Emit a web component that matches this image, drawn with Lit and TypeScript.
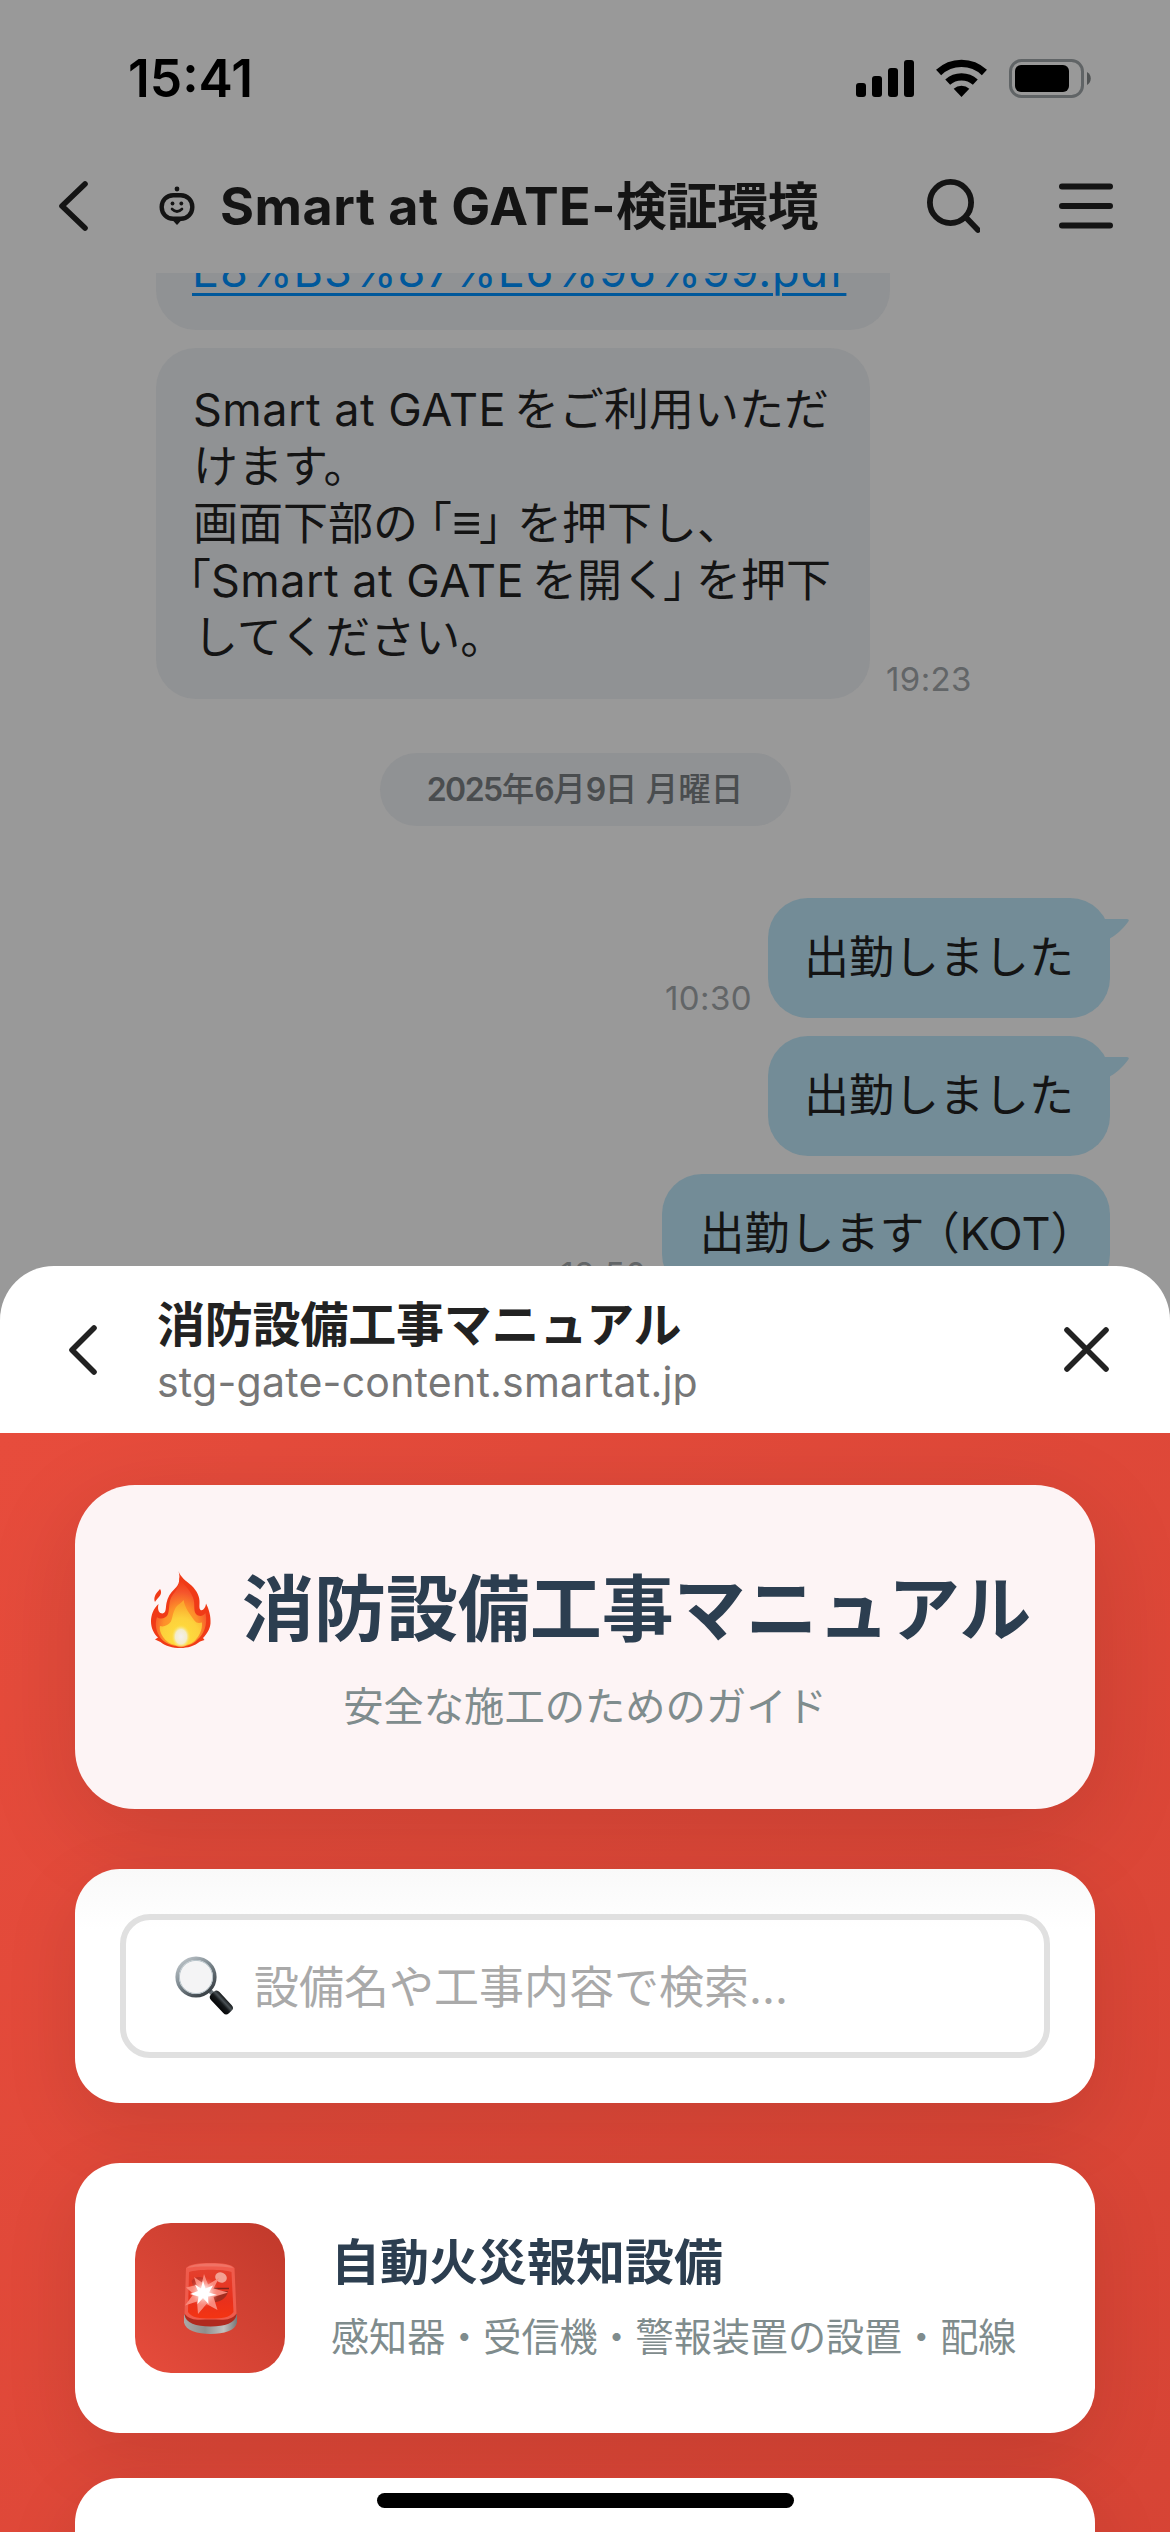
import { LitElement, html, css } from "lit";
import { customElement } from "lit/decorators.js";

const fireIcon = html`<svg class="fire" viewBox="0 0 120 154">
  <defs>
    <radialGradient id="fo" cx="50%" cy="78%" r="72%">
      <stop offset="0" stop-color="#ffb02a" /><stop offset=".5" stop-color="#fd8f2a" />
      <stop offset=".78" stop-color="#f5552c" /><stop offset="1" stop-color="#f03a17" />
    </radialGradient>
    <radialGradient id="fy" cx="50%" cy="85%" r="75%">
      <stop offset="0" stop-color="#ffe23e" /><stop offset=".6" stop-color="#fdd13c" />
      <stop offset="1" stop-color="#fba92e" />
    </radialGradient>
    <radialGradient id="fw" cx="50%" cy="55%" r="50%">
      <stop offset="0" stop-color="#f4f0ee" /><stop offset=".6" stop-color="#f3eccb" />
      <stop offset="1" stop-color="#ffe04a" stop-opacity="0" />
    </radialGradient>
  </defs>
  <path fill="#f03a17" d="M18 36C22 42 20 48 15 53C12 57 9 59 8 62C5 55 8 48 12 43Z" />
  <path fill="#f03a17" d="M55 0C58 11 70 20 81 29C92 40 98 52 97 64C97 70 96 75 99 78C104 80 109 74 110 65C116 76 120 91 119 105C118 116 112 126 104 134L107 138L98 141C87 150 73 154 59 154C43 154 29 150 19 142L8 137L14 133C5 125 0 113 0 101C0 88 5 75 15 66C12 79 17 85 23 85C31 84 29 73 31 64C33 53 39 43 47 36C57 28 59 14 55 0Z" />
  <path fill="url(#fo)" d="M56 12C61 24 78 36 84 53C89 67 84 78 90 86C98 94 106 88 109 84C114 109 105 127 93 137C83 148 69 151 59 151C43 151 24 144 16 129C9 117 8 104 12 92C18 98 31 95 34 86C38 74 34 60 44 47C53 37 59 25 56 12Z" />
  <path fill="url(#fy)" d="M65 58C68 75 78 86 86 98C92 106 97 104 102 103C103 119 96 130 88 139C77 151 44 154 29 138C21 129 16 119 18 110C25 113 35 108 40 101C44 91 44 77 54 68C59 64 63 62 65 58Z" />
  <ellipse cx="60" cy="129" rx="19" ry="24" fill="url(#fw)" />
</svg>`;

const glassIcon = html`<svg class="glass" viewBox="0 0 60 60">
  <defs>
    <linearGradient id="gr" x1="0" y1="0" x2=".7" y2="1">
      <stop offset="0" stop-color="#c8ced2" /><stop offset=".5" stop-color="#7d8990" />
      <stop offset="1" stop-color="#3b4247" />
    </linearGradient>
    <linearGradient id="gh" x1="0" y1="0" x2="1" y2="0">
      <stop offset="0" stop-color="#050607" /><stop offset=".45" stop-color="#14181a" />
      <stop offset=".7" stop-color="#4b5256" /><stop offset="1" stop-color="#15181a" />
    </linearGradient>
  </defs>
  <path d="M33 33L40 40" stroke="#687177" stroke-width="4.500" />
  <rect x="-5.800" y="0" width="11.600" height="26" rx="4" fill="url(#gh)" transform="translate(37.500 37) rotate(-43)" />
  <circle cx="21" cy="21" r="18.8" fill="#f4f4f5" stroke="url(#gr)" stroke-width="3.6" />
  <circle cx="21" cy="21" r="16.6" fill="none" stroke="#b7c3c9" stroke-width="1" />
</svg>`;

const sirenIcon = html`<svg class="siren" viewBox="0 0 106 142">
  <defs>
    <linearGradient id="sb" x1="0" y1="0" x2="1" y2="0">
      <stop offset="0" stop-color="#aaa9a7" /><stop offset=".4" stop-color="#8f8f8d" />
      <stop offset=".75" stop-color="#c2c1bf" /><stop offset="1" stop-color="#777" />
    </linearGradient>
    <linearGradient id="sd" x1="0" y1="0" x2="0" y2="1">
      <stop offset="0" stop-color="#e4402e" /><stop offset=".65" stop-color="#e9301b" />
      <stop offset="1" stop-color="#f43412" />
    </linearGradient>
    <radialGradient id="sg"><stop offset="0" stop-color="#fff" /><stop offset=".4" stop-color="#fff" stop-opacity=".6" />
      <stop offset="1" stop-color="#ff7c6c" stop-opacity="0" /></radialGradient>
  </defs>
  <path fill="url(#sb)" d="M0 103V119C3 135 27 142 53 142C80 142 103 135 106 119V103Z" />
  <path fill="#b02a1e" d="M1 103C3 120 24 127 53 127C82 127 103 120 105 103L98 94H8Z" />
  <path fill="#ef5b4c" d="M4 10C11 2 30 0 53 0C76 0 95 2 101 10L105 101C94 117 75 113 53 113C31 113 12 117 1 101Z" />
  <path fill="url(#sd)" d="M10 18C26 12 80 12 95 18L99 98C91 110 75 111 53 111C31 111 16 110 8 98Z" />
  <path fill="#f07365" d="M6 10C15 3 32 1 53 1C74 1 92 3 99 10C84 7 70 7 53 7C34 7 21 7 6 10Z" />
  <path d="M15 36C22 25 36 26 46 34L42 48L20 52Z" fill="#c23327" />
  <path d="M59 56H88C86 68 76 77 61 78Z" fill="#a32d20" />
  <path d="M55 51H90" stroke="#7e241b" stroke-width="3" />
  <ellipse cx="74" cy="29" rx="12" ry="10" fill="#f3a092" transform="rotate(25 74 29)" />
  <path fill="#f9897b" d="M40 22L48 43L70 30L59 51L88 59L59 68L67 94L45 82L28 102L26 77L2 85L19 62L4 49L25 44L20 28L36 39Z" />
  <circle cx="40" cy="59" r="30" fill="url(#sg)" />
  <path fill="#fff" d="M38 35L43 51L58 45L50 59L66 64L48 67L49 82L38 70L27 82L29 67L12 62L28 56L22 43L34 51Z" />
</svg>`;

@customElement("status-bar")
class StatusBar extends LitElement {
  static styles = css`
    :host { display: flex; height: 156px; align-items: center; padding: 0 79px 0 128px; color: #000; }
    .time { flex: 1; font-size: 51.500px; font-weight: 600; letter-spacing: 0; line-height: 60px; }
    .icons { display: flex; gap: 22px; align-items: center; }
    svg { display: block; }
  `;
  render() {
    return html`
      <div class="time">15:41</div>
      <div class="icons">
        <svg width="58" height="39" viewBox="0 0 58 39">
          <rect y="24" width="10" height="14" rx="3" /><rect x="16" y="17" width="10" height="21" rx="3" />
          <rect x="32" y="9" width="10" height="29" rx="3" /><rect x="48" y="1" width="10" height="37" rx="3" />
        </svg>
        <svg width="51" height="39" viewBox="0 -1 51 39">
          <g fill="none" stroke="#000">
            <path stroke-width="7.4" d="M2.6 12.5A33.2 33.2 0 0 1 48.4 12.5" />
            <path stroke-width="7.2" d="M11.7 22.2A20.3 20.3 0 0 1 39.3 22.2" />
          </g>
          <path d="M17.7 28.8A11.8 11.8 0 0 1 33.3 28.8L25.5 37Z" />
        </svg>
        <svg width="82" height="39" viewBox="0 0 82 39">
          <rect x="1.5" y="1.5" width="72" height="36" rx="11" fill="none" stroke="#606466" stroke-width="3" />
          <rect x="6" y="6" width="54" height="27" rx="6" />
          <path fill="#505354" d="M78 13C83 15.500 83 23.500 78 26Z" />
        </svg>
      </div>`;
  }
}

@customElement("chat-header")
class ChatHeader extends LitElement {
  static styles = css`
    :host { display: flex; height: 117px; box-sizing: border-box; align-items: center; padding: 0 57px 17px 56px; color: #141414; }
    svg { display: block; flex: none; }
    .bot { margin-left: 67px; }
    .title { flex: 1; margin-left: 25px; padding-top: 2px; font-size: 52px; font-weight: 700; line-height: 64px; white-space: nowrap; letter-spacing: 0.5px; }
    .cjk { font-size: 51px; letter-spacing: -0.5px; }
    .menu { margin-left: 79px; }
  `;
  render() {
    return html`
      <svg width="36" height="56" viewBox="0 0 36 56" fill="none" stroke="#141414" stroke-width="5.6" stroke-linecap="round" stroke-linejoin="round">
        <path d="M29 6L6 28L29 50" />
      </svg>
      <svg class="bot" width="36" height="40" viewBox="0 0 36 40">
        <circle cx="18" cy="3" r="2.400" fill="#141414" />
        <path fill="#141414" d="M12 32.500L18 39L24 32.500Z" />
        <rect x="2.700" y="9.200" width="30.600" height="23.600" rx="11.500" fill="none" stroke="#141414" stroke-width="4.400" />
        <circle cx="13.500" cy="17.500" r="1.900" fill="#141414" /><circle cx="22.300" cy="17.500" r="1.900" fill="#141414" />
        <path d="M13 23Q18 28 23 23" fill="none" stroke="#141414" stroke-width="2.600" stroke-linecap="round" />
      </svg>
      <div class="title">Smart at GATE-<span class="cjk">検証環境</span></div>
      <svg width="56" height="56" viewBox="924 178 56 56" fill="none" stroke="#141414" stroke-width="5.800" stroke-linecap="round">
        <circle cx="950.500" cy="202.500" r="20.600" /><path d="M966 217.500L978 230" />
      </svg>
      <svg class="menu" width="54" height="46" viewBox="0 0 54 46" stroke="#141414" stroke-width="6" stroke-linecap="round">
        <path d="M3 3.500H51M3 23H51M3 42.500H51" />
      </svg>`;
  }
}

@customElement("chat-log")
class ChatLog extends LitElement {
  static styles = css`
    :host { display: flex; flex-direction: column; height: 1020px; overflow: hidden; font-size: 45px; line-height: 57.2px; color: #141414; }
    .row { display: flex; align-items: flex-end; gap: 16px; padding-left: 156px; margin-bottom: 18px; flex: none; }
    .row.mine { justify-content: flex-end; padding: 0 60px 0 0; margin-bottom: 18.500px; }
    .row.first { margin-top: -64px; }
    .bubble { position: relative; box-sizing: border-box; background: #909294; border-radius: 40px; padding: 32.500px 37px; white-space: nowrap; }
    .link { width: 734px; padding-left: 36px; height: 121px; color: #00589b; }
    .link span { text-decoration: underline; text-decoration-thickness: 3px; text-underline-offset: 6px; letter-spacing: 0.850px; }
    .info { width: 714px; height: 351px; }
    .line { height: 57.200px; }
    .latin { letter-spacing: 0.450px; }
    .gap { margin-left: 8px; }
    .open { margin-left: -11px; }
    .equiv { display: inline-block; width: 27px; font-family: "Liberation Sans", sans-serif; font-size: 50px; line-height: 50px; }
    .close { margin-right: -7px; }
    .lead { margin-left: -27px; }
    .hang { margin-left: -4px; margin-right: -12px; }
    .mine .bubble { background: #738c97; height: 119.500px; padding: 31px 36px; }
    .mine .kot { padding: 31px 37px; letter-spacing: 0; }
    .half { font-feature-settings: "halt"; }
    .tail { position: absolute; right: -19px; top: 21px; }
    .time { font-size: 33px; line-height: 40px; color: #626567; letter-spacing: 0.400px; }
    .date { align-self: center; display: flex; align-items: center; justify-content: center; flex: none;
      box-sizing: border-box; width: 411px; height: 73px; margin: 36px 0 72px; border-radius: 37px; background: #909294;
      font-size: 32.500px; color: #4a4d4f; font-weight: 500; line-height: 40px; white-space: pre; }
    .date b { font-weight: 600; font-size: 32px; letter-spacing: -1.500px; }
  `;
  tail() {
    return html`<svg class="tail" width="24" height="20" viewBox="0 0 24 20">
      <path fill="#738c97" d="M0 0H22Q25 0.500 23 3Q15 14 4 20H0Z" />
    </svg>`;
  }
  render() {
    return html`
      <div class="row first"><div class="bubble link"><span>E8%B3%87%E6%96%99.pdf</span></div></div>
      <div class="row">
        <div class="bubble info">
          <div class="line"><span class="latin">Smart at GATE</span><span class="gap">をご利用いただ</span></div>
          <div class="line">けます。</div>
          <div class="line">画面下部の<span class="open">「</span><span class="equiv">≡</span><span class="close">」</span>を押下し、</div>
          <div class="line"><span class="lead">「</span><span class="latin">Smart at GATE</span><span class="gap">を開く</span><span class="hang">」</span>を押下</div>
          <div class="line">してください。</div>
        </div>
        <span class="time">19:23</span>
      </div>
      <div class="date"><b>2025</b>年<b>6</b>月<b>9</b>日 月曜日</div>
      <div class="row mine"><span class="time">10:30</span><div class="bubble">出勤しました${this.tail()}</div></div>
      <div class="row mine"><div class="bubble">出勤しました${this.tail()}</div></div>
      <div class="row mine"><span class="time">18:50</span><div class="bubble kot">出勤します<span class="half"> （</span>KOT<span class="half">）</span></div></div>`;
  }
}

@customElement("manual-page")
class ManualPage extends LitElement {
  static styles = css`
    :host { display: block; flex: 1; overflow: hidden; color: #2c3e50; }
    .page { box-sizing: border-box; height: 4200px; padding: 52px 75px 0; background: linear-gradient(135deg, #e74c3c, #c0392b); }
    svg { display: block; flex: none; }
    .hero { box-sizing: border-box; height: 324px; border-radius: 60px; background: #fdf4f5; padding-top: 71px;
      box-shadow: 0 24px 96px rgba(0, 0, 0, 0.12); }
    .heading { display: flex; align-items: center; padding-left: 76px; }
    .fire { width: 60px; height: 77px; margin-top: 1px; }
    h1 { margin: 1px 0 0 31px; font-size: 72px; line-height: 104px; font-weight: 700; white-space: nowrap; letter-spacing: -0.050px; }
    .tagline { margin-top: 16px; text-align: center; font-size: 40.300px; line-height: 60px; color: #7f8c8d; }
    .card { position: relative; background: #fff; border-radius: 45px; box-shadow: 0 24px 75px rgba(0, 0, 0, 0.1); box-sizing: border-box; }
    .search { height: 234px; margin-top: 60px; padding: 45px; background: linear-gradient(#f9f9f9, #fff 26%); }
    .field { display: flex; align-items: center; box-sizing: border-box; height: 144px; border: 6px solid #e0e0e0; border-radius: 30px; padding-left: 49px;
      font-size: 45px; line-height: 60px; color: #a9a9a9; white-space: nowrap; }
    .field span { padding-top: 3px; }
    .glass { width: 60px; height: 60px; margin-right: 19px; }
    .item { display: flex; align-items: center; height: 270px; margin-top: 60px; padding-left: 60px; }
    .tile { width: 150px; height: 150px; border-radius: 36px; display: flex; align-items: center; justify-content: center; background: linear-gradient(45deg, #e74c3c, #c0392b); }
    .siren { width: 53px; height: 71px; }
    .text { margin-left: 46px; margin-top: 3px; white-space: nowrap; }
    h2 { margin: 0 0 4px; font-size: 49px; line-height: 70px; font-weight: 700; }
    p { margin: 0; font-size: 38.100px; line-height: 70px; color: #7f8c8d; }
    .next { margin-top: 45px; }
  `;
  render() {
    return html`<div class="page">
      <header class="hero">
        <div class="heading">${fireIcon}<h1>消防設備工事マニュアル</h1></div>
        <div class="tagline">安全な施工のためのガイド</div>
      </header>
      <section class="card search"><div class="field">${glassIcon}<span>設備名や工事内容で検索...</span></div></section>
      <section class="card item">
        <div class="tile">${sirenIcon}</div>
        <div class="text"><h2>自動火災報知設備</h2><p>感知器・受信機・警報装置の設置・配線</p></div>
      </section>
      <section class="card item next"></section>
    </div>`;
  }
}

@customElement("app-root")
class AppRoot extends LitElement {
  static styles = css`
    :host { display: block; position: relative; width: 1170px; height: 2532px; overflow: hidden; background: #999;
      font-family: Inter, "Noto Sans CJK JP", sans-serif; }
    .sheet { position: absolute; left: 0; top: 1266px; width: 1170px; height: 1266px; display: flex; flex-direction: column;
      overflow: hidden; background: #fff; border-radius: 54px 54px 0 0; }
    .bar { display: flex; height: 167px; flex: none; box-sizing: border-box; align-items: center; padding: 0 58px 0 65px; }
    .bar svg { flex: none; display: block; }
    .titles { flex: 1; margin-left: 56px; padding-top: 5px; white-space: nowrap; }
    .name { font-size: 48px; font-weight: 700; line-height: 60px; color: #222; letter-spacing: -0.200px; }
    .host { font-size: 41px; line-height: 54px; color: #777; letter-spacing: 0.230px; }
    .home { position: absolute; left: 377px; top: 2493px; width: 417px; height: 15px; border-radius: 8px; background: #000; }
  `;
  render() {
    return html`
      <status-bar></status-bar>
      <chat-header></chat-header>
      <chat-log></chat-log>
      <div class="sheet">
        <div class="bar">
          <svg width="36" height="56" viewBox="0 0 36 56" fill="none" stroke="#222" stroke-width="5.6" stroke-linecap="round" stroke-linejoin="round"><path d="M29 6L7 28L29 50" /></svg>
          <div class="titles"><div class="name">消防設備工事マニュアル</div><div class="host">stg-gate-content.smartat.jp</div></div>
          <svg width="50" height="50" viewBox="0 0 50 50" stroke="#222" stroke-width="5.6" stroke-linecap="round"><path d="M5 5L44 44M44 5L5 44" /></svg>
        </div>
        <manual-page></manual-page>
      </div>
      <div class="home"></div>`;
  }
}
